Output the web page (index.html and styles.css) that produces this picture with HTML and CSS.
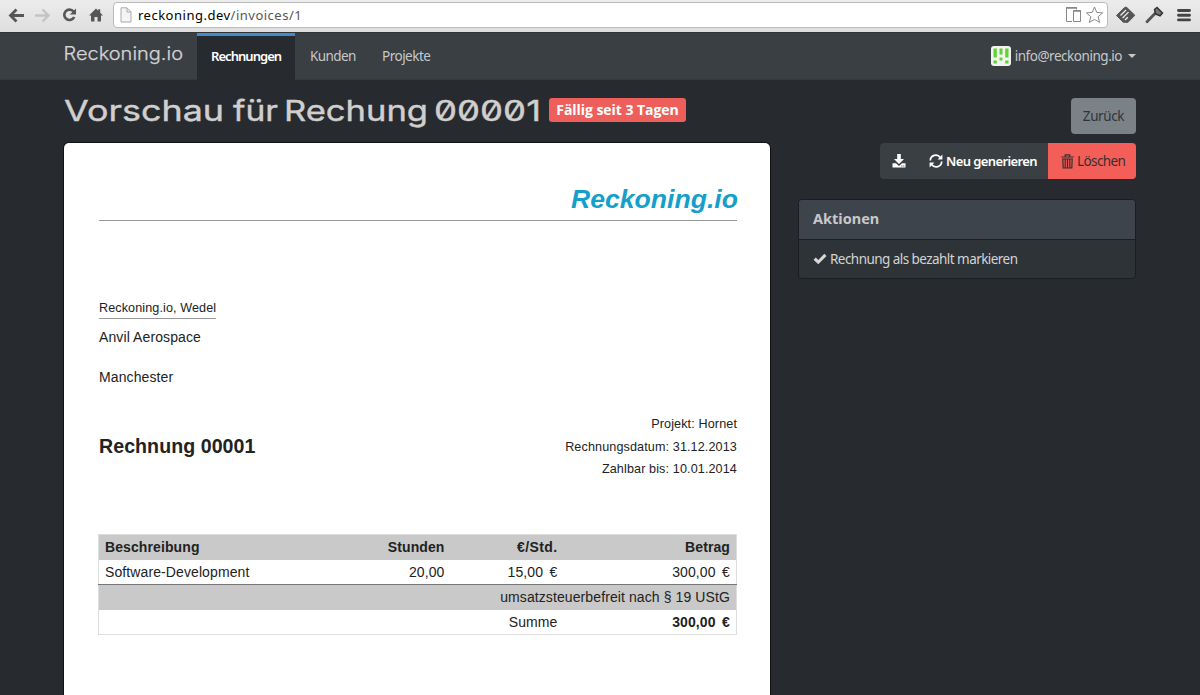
FILE: index.html
```html
<!DOCTYPE html>
<html lang="de">
<head>
<meta charset="utf-8">
<title>Reckoning.io</title>
<link rel="stylesheet" href="styles.css">
</head>
<body>
<div class="browser">
  <svg class="browser-nav" width="104" height="30" viewBox="0 0 104 30" fill="none">
    <path d="M24 15.500H11M16.500 9.500L10.500 15.500L16.500 21.500" stroke="#565656" stroke-width="2.800"/>
    <path d="M35 15.500H48M42.500 9.500L48.500 15.500L42.500 21.500" stroke="#c3c3c3" stroke-width="2.400"/>
    <path d="M73.500 11.500A5.200 5.200 0 1 0 74.200 17" stroke="#565656" stroke-width="2.600"/>
    <path d="M76 8.500V14.500H69.800Z" fill="#565656"/>
    <path d="M89 15.500L96 8.500L98.200 10.700V9.300H100.200V12.700L103 15.500H101V21.500H97.500V17H94.500V21.500H91V15.500Z" fill="#565656"/>
  </svg>
  <div class="address">
    <svg width="12" height="16" viewBox="0 0 12 16"><path d="M1 .8H7L11 4.800V15H1Z" fill="#f4f4f4" stroke="#aaa"/><path d="M7 1V5H11" fill="none" stroke="#aaa"/></svg>
    <span class="url"><b>reckoning.dev</b>/invoices/1</span>
    <svg class="address-tools" width="40" height="20" viewBox="0 0 40 20" fill="none" stroke="#888">
      <path d="M7 16.500H1.500V2.500H11.500V4.500M8.500 5.500H15.500V16.500H8.500Z"/><path d="M1 3H12M8 6H16" stroke-width="1.500"/>
      <path d="M29.500 2L31.800 7.400L37.600 7.900L33.200 11.700L34.600 17.400L29.500 14.400L24.400 17.400L25.800 11.700L21.400 7.900L27.200 7.400Z"/>
    </svg>
  </div>
  <svg class="browser-ext" width="80" height="30" viewBox="0 0 80 30" fill="none">
    <path d="M5.500 15.500L13.500 7.600Q14.700 6.600 15.900 7.600L23.800 15.300L17 22.300H12.300Z" fill="#555" stroke="#555" stroke-width="1"/>
    <path d="M9.500 15.500L15 10M11.600 18L17.500 12.100M14 20L16.800 17.200" stroke="#eee" stroke-width="1.300"/>
    <path d="M36 21.800L44 13.500" stroke="#555" stroke-width="2.800" stroke-linecap="round"/>
    <path d="M43.500 9.500L46 7.500L51.500 13L49 15.800L44.500 14Z" fill="#777" stroke="#333" stroke-width="1.500"/>
    <path d="M67.500 10.500H78.500M67.500 15.200H78.500M67.500 19.900H78.500" stroke="#444" stroke-width="2.900" stroke-linecap="round"/>
  </svg>
</div>
<nav class="navbar">
  <div class="container navbar-row">
    <svg class="brand" width="133" height="46"><text x="-.5" y="27" textLength="119.5" lengthAdjust="spacingAndGlyphs">Reckoning.io</text></svg>
    <a class="nav-link active">Rechnungen</a>
    <a class="nav-link kunden">Kunden</a>
    <a class="nav-link">Projekte</a>
    <div class="user">
      <svg width="20" height="20" viewBox="0 0 20 20"><rect width="20" height="20" rx="3" fill="#f3f3f3"/><path d="M2.500 2.500H5.800V11.500H2.500ZM8.500 2.500H11.500V8.500H8.500ZM14.200 2.500H17.500V11.500H14.200ZM8.500 11.500H11.500V14.500H8.500ZM2.500 14.500H5.800V17.500H2.500ZM14.200 14.500H17.500V17.500H14.200Z" fill="#5ed52e"/></svg>
      <span class="email">info@reckoning.io</span><i class="caret"></i>
    </div>
  </div>
</nav>
<main class="container">
  <header class="heading">
    <svg class="title" width="484" height="46">
      <text x="0" y="32" textLength="160" lengthAdjust="spacingAndGlyphs">Vorschau</text>
      <text x="169" y="32" textLength="45" lengthAdjust="spacingAndGlyphs">für</text>
      <text x="220" y="32" textLength="144" lengthAdjust="spacingAndGlyphs">Rechung</text>
      <text x="370" y="32" textLength="107" lengthAdjust="spacingAndGlyphs">00001</text>
    </svg>
    <span class="label">Fällig seit 3 Tagen</span>
    <a class="back">Zurück</a>
  </header>
  <div class="columns">
    <article class="invoice">
      <div class="letterhead"><span>Reckoning.io</span></div>
      <div class="sender"><span>Reckoning.io, Wedel</span></div>
      <div class="recipient"><p>Anvil Aerospace</p><p>Manchester</p></div>
      <div class="summary">
        <h2>Rechnung 00001</h2>
        <ul><li>Projekt: Hornet</li><li>Rechnungsdatum: 31.12.2013</li><li>Zahlbar bis: 10.01.2014</li></ul>
      </div>
      <table>
        <colgroup><col class="c1"><col class="c2"><col class="c3"><col class="c4"></colgroup>
        <tr class="shade"><th>Beschreibung</th><th>Stunden</th><th class="rate">€/Std.</th><th>Betrag</th></tr>
        <tr><td>Software-Development</td><td>20,00</td><td class="money">15,00 €</td><td class="money">300,00 €</td></tr>
        <tr class="shade tax"><td colspan="4">umsatzsteuerbefreit nach § 19 UStG</td></tr>
        <tr><td></td><td></td><td>Summe</td><th class="money">300,00 €</th></tr>
      </table>
    </article>
    <aside>
      <div class="buttons">
        <a class="btn download"><svg width="14" height="14" viewBox="0 0 14 14"><path d="M5.200 0H8.800V5H12L7 10L2 5H5.200Z" fill="#fff"/><path d="M.5 9.200H4L7 12L10 9.200H13.500V13.500H.5Z" fill="#fff"/><path d="M9.300 12H10.300M11.300 12H12.300" stroke="#3a3f44"/></svg></a>
        <a class="btn refresh"><svg width="14" height="14" viewBox="0 0 14 14" fill="none"><path d="M1.300 6.500A5.500 5.500 0 0 1 11.300 3.500M12.700 7.500A5.500 5.500 0 0 1 2.700 10.500" stroke="#fff" stroke-width="1.700"/><path d="M13.400 .6V5.400H8.600ZM.6 13.400V8.600H5.400Z" fill="#fff"/></svg><span>Neu generieren</span></a>
        <a class="btn delete"><svg width="13" height="15" viewBox="0 0 13 15" fill="none" stroke="#35302f"><path d="M.3 3H12.700M4.200 2.800V.8H8.800V2.800" stroke-width="1.200"/><path d="M1.800 5H11.200L10.800 14H2.200ZM4.200 5V14M6.500 5V14M8.800 5V14" stroke-width="1.200"/></svg><span>Löschen</span></a>
      </div>
      <section class="panel">
        <h3>Aktionen</h3>
        <div class="panel-body"><svg width="14" height="12" viewBox="0 0 14 12"><path d="M.5 6.700L2.800 4.400L5.300 6.900L11.300 .8L13.500 3L5.300 11.300Z" fill="#d8d8d8"/></svg><span>Rechnung als bezahlt markieren</span></div>
      </section>
    </aside>
  </div>
</main>
</body>
</html>
```
FILE: styles.css
```css
* { box-sizing: border-box; }
body { margin: 0; height: 695px; overflow: hidden; background: #272b30; color: #c8c8c8; font: 14px/20px "Noto Sans", "Open Sans", sans-serif; }
svg { display: block; flex: none; }
p, h2, h3, ul { margin: 0; padding: 0; }
.browser { height: 32px; display: flex; background: linear-gradient(#ececec, #dedede); }
.browser-nav { margin-right: 9px; }
.address { width: 995px; height: 26px; margin-top: 2px; padding: 0 2px 0 6px; display: flex; align-items: center; background: #fff; border: 1px solid #bbb; border-radius: 4px; }
.url { margin-left: 6px; font-size: 13px; letter-spacing: .5px; color: #555; }
.url b { font-weight: 400; color: #000; }
.address-tools { margin-left: auto; }
.browser-ext { margin-left: 3px; }
.navbar { height: 48px; background: #3a3f44; border-top: 1px solid #303438; border-bottom: 1px solid #34393d; }
.container { width: 1072px; margin: 0 auto; }
.navbar-row { display: flex; height: 46px; }
.brand text { font: 300 18px Inter, sans-serif; fill: #d5d5d5; stroke: #d5d5d5; stroke-width: .25px; }
.nav-link { height: 47px; padding: 13px 14px 0; font-size: 13.500px; letter-spacing: -.5px; white-space: nowrap; }
.nav-link.active { width: 98px; padding-top: 10px; border-top: 3px solid #438bca; background: #272b30; color: #fff; font-size: 13px; font-weight: 600; letter-spacing: -.95px; }
.nav-link.kunden { width: 73px; letter-spacing: -.6px; padding-left: 15px; }
.user { margin-left: auto; display: flex; align-items: center; }
.email { margin-left: 4px; font-size: 13.500px; letter-spacing: -.47px; }
.caret { margin-left: 6px; border: 4px solid transparent; border-top-color: #c8c8c8; border-bottom: 0; }
.heading { height: 63px; padding-top: 9px; display: flex; }
.title text { font: 400 29px Inter, sans-serif; font-feature-settings: "zero"; fill: #d1cfcd; stroke: #d1cfcd; stroke-width: .4px; }
.label { height: 24px; margin: 9px 0 0 1px; width: 137px; text-align: center; border-radius: 3px; background: #ee5f5b; color: #fff; font: 700 14px/23px "Open Sans", sans-serif; letter-spacing: -.05px; }
.back { width: 65px; height: 36px; margin: 9px 0 0 auto; border-radius: 4px; background: #7a8288; color: #303438; line-height: 36px; text-align: center; font-size: 13.500px; letter-spacing: -.4px; }
.columns { display: flex; justify-content: space-between; }
.invoice { width: 706px; height: 570px; padding: 38px 33px 0 35px; background: #fff; border-radius: 5px; box-shadow: 0 0 0 1px #101214; color: #222; font: 14px/20px "Liberation Sans", sans-serif; letter-spacing: .1px; }
.letterhead { height: 40px; border-bottom: 1px solid #999; text-align: right; font: italic 700 26.600px/36px "Liberation Sans", sans-serif; color: #159fcb; letter-spacing: 0; }
.letterhead span { margin-right: -1px; }
.sender { margin-top: 77px; height: 29px; font-size: 12.600px; letter-spacing: .1px; }
.sender span { display: inline-block; line-height: 19px; border-bottom: 1px solid #999; }
.recipient { display: grid; gap: 20px; }
.summary { display: flex; justify-content: space-between; margin-top: 26px; }
.summary h2 { font-size: 19.600px; line-height: 24px; letter-spacing: .05px; margin-top: 21px; }
.summary ul { list-style: none; text-align: right; font-size: 12.600px; line-height: 22.700px; letter-spacing: .12px; }
table { width: 638px; margin: 53px 0 0 -1px; table-layout: fixed; border-collapse: collapse; border: 1px solid #ddd; }
.c1 { width: 221px; } .c2 { width: 131px; } .c3 { width: 113px; } .c4 { width: 173px; }
tr { height: 25px; }
th, td { padding: 0 6px; line-height: 20px; text-align: right; }
th:first-child, td:first-child:not([colspan]) { text-align: left; }
.money { word-spacing: 2.500px; }
.rate { letter-spacing: .4px; }
.shade { background: #c9c9c9; }
.tax { border-top: 1px solid #777; }
aside { width: 338px; }
.buttons { display: flex; width: 256px; height: 36px; margin-left: auto; overflow: hidden; border-radius: 4px; background: #3a3f44; color: #fff; }
.btn { display: flex; align-items: center; gap: 3px; white-space: nowrap; font-size: 13.500px; }
.download { width: 37px; padding-left: 12px; }
.refresh { width: 131px; padding-left: 12px; font-size: 13px; font-weight: 600; letter-spacing: -.6px; }
.delete { width: 88px; padding-left: 13px; background: #f35e59; color: #35302f; letter-spacing: -.6px; }
.panel { margin-top: 20px; height: 80px; border: 1px solid #1b1e20; border-radius: 4px; overflow: hidden; background: #2e3338; }
.panel h3 { height: 40px; padding-left: 14px; border-bottom: 1px solid #1c1e22; background: #3e444c; font: 700 14.500px/37px "Noto Sans", sans-serif; }
.panel-body { height: 38px; padding-left: 14px; display: flex; align-items: center; gap: 3px; font-size: 13.500px; letter-spacing: -.55px; color: #d4d4d4; }
```
